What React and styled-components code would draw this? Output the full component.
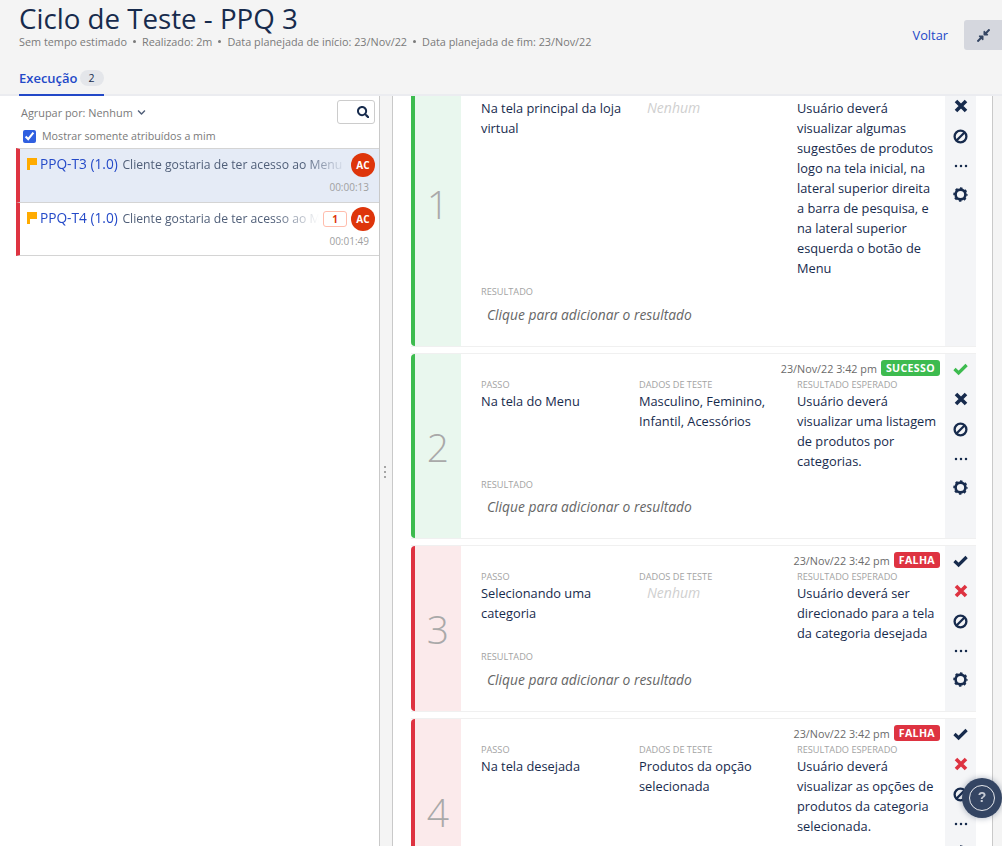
import React from "react";
import styled, { createGlobalStyle } from "styled-components";
import { FaChevronDown, FaCompressAlt, FaSearch } from "react-icons/fa";

const GlobalStyle = createGlobalStyle`
  html, body {
    margin: 0;
    height: 100%;
    overflow: hidden;
    font-family: "Open Sans", "Noto Sans", sans-serif;
    color: #172b4d;
    background: #f4f4f4;
  }
  * { box-sizing: border-box; }
`;

const Page = styled.div`
  height: 846px;
  display: flex;
  flex-direction: column;
  overflow: hidden;
`;

const Header = styled.header`
  height: 96px;
  flex: none;
  display: flex;
  justify-content: space-between;
  background: #f4f4f4;
  border-bottom: 2px solid #ebecf0;
  padding-left: 19px;
`;

const Title = styled.h1`
  margin: 0;
  font-size: 27.7px;
  line-height: 37px;
  font-weight: 400;
  color: #172b4d;
`;

const Meta = styled.div`
  display: flex;
  align-items: center;
  gap: 5px;
  height: 14px;
  margin-top: -3px;
  font-size: 10.85px;
  color: #7a7a7a;
`;

const Dot = styled.span`
  width: 3px;
  height: 3px;
  margin: 0 1px;
  border-radius: 50%;
  background: #7a7a7a;
`;

const Tabs = styled.div`
  display: flex;
  margin-top: 22px;
`;

const Tab = styled.div`
  display: flex;
  align-items: center;
  gap: 2px;
  height: 26px;
  padding-bottom: 9px;
  border-bottom: 2px solid #2349c8;
  font-size: 13px;
  font-weight: 600;
  color: #2349c8;
`;

const TabCount = styled.span`
  width: 24px;
  height: 16px;
  border-radius: 8px;
  background: #e4e6ea;
  color: #172b4d;
  font-size: 10.5px;
  font-weight: 400;
  line-height: 16px;
  text-align: center;
`;

const HeaderActions = styled.div`
  display: flex;
  align-items: center;
  gap: 16px;
  height: 30px;
  margin-top: 20px;
`;

const BackLink = styled.a`
  font-size: 12.8px;
  color: #2349c8;
`;

const CollapseButton = styled.button`
  width: 38px;
  height: 30px;
  display: flex;
  align-items: center;
  justify-content: center;
  padding: 0;
  border: 0;
  border-radius: 3px 0 0 3px;
  background: #d5d7de;
  color: #344563;
  font-size: 15px;
`;

const Main = styled.div`
  flex: 1;
  min-height: 0;
  display: flex;
`;

const Sidebar = styled.aside`
  width: 380px;
  flex: none;
  background: #fff;
  border-right: 1px solid #c9c9c9;
  padding-left: 16px;
`;

const FilterBar = styled.div`
  height: 52px;
  padding: 4px 4px 0 5px;
  display: grid;
  grid-template-columns: 1fr 38px;
  grid-template-rows: 24px 1fr;
  align-items: center;
`;

const GroupBy = styled.div`
  display: flex;
  align-items: center;
  gap: 4px;
  font-size: 10.9px;
  color: #7a7a7a;
  svg { font-size: 9px; color: #505f79; }
`;

const SearchBox = styled.div`
  height: 24px;
  display: flex;
  align-items: center;
  justify-content: flex-end;
  padding-right: 5px;
  border: 1px solid #ccc;
  border-radius: 3px;
  font-size: 12.5px;
  color: #172b4d;
`;

const OnlyMine = styled.label`
  grid-column: 1 / -1;
  display: flex;
  align-items: center;
  gap: 6px;
  padding-left: 2px;
  font-size: 10.7px;
  color: #7a7a7a;
  input {
    width: 13px;
    height: 13px;
    margin: 0;
    accent-color: #2f5fe0;
  }
`;

const TestRow = styled.div`
  height: 54px;
  padding: 4px 4px 0 7px;
  border-left: 4px solid #de3341;
  border-top: 1px solid #d4d4d4;
  border-bottom: ${(p) => (p.$last ? "1px solid #d4d4d4" : "0")};
  background: ${(p) => (p.$active ? "#e5ebf6" : "#fff")};
`;

const RowTop = styled.div`
  display: flex;
  align-items: center;
  gap: 4px;
  height: 24px;
`;

const FlagIcon = styled.svg`
  flex: none;
  width: 10px;
  height: 12px;
  margin-right: -1px;
  margin-top: -2px;
  fill: #ffab00;
`;

const RowTitle = styled.div`
  flex: 1;
  min-width: 0;
  margin-top: -3px;
  white-space: nowrap;
  overflow: hidden;
  font-size: 12.2px;
  color: #505f79;
  -webkit-mask-image: linear-gradient(to right, #000 calc(100% - 44px), transparent);
  mask-image: linear-gradient(to right, #000 calc(100% - 44px), transparent);
  b { margin-right: 1.5px; font-size: 13.7px; font-weight: 400; color: #2349c8; }
`;

const IssueCount = styled.span`
  flex: none;
  width: 24px;
  height: 16px;
  border: 1px solid #ffbdad;
  border-radius: 3px;
  background: #fff;
  color: #de350b;
  font-size: 10px;
  font-weight: 700;
  line-height: 14px;
  text-align: center;
`;

const Avatar = styled.span`
  flex: none;
  width: 24px;
  height: 24px;
  border-radius: 50%;
  background: #de350b;
  color: #fff;
  font-size: 10px;
  font-weight: 700;
  line-height: 24px;
  text-align: center;
`;

const RowTime = styled.div`
  margin-top: 3px;
  padding-right: 6px;
  text-align: right;
  font-size: 10px;
  line-height: 14px;
  color: #a0a0a0;
`;

const Splitter = styled.div`
  width: 13px;
  flex: none;
  display: flex;
  flex-direction: column;
  align-items: center;
  justify-content: center;
  gap: 3px;
  padding: 2px 3px 0 0;
  background: #f4f4f4;
  border-right: 1px solid #c9c9c9;
  i {
    width: 2px;
    height: 2px;
    background: #a5a5a5;
  }
`;

const StepsPane = styled.section`
  width: 600px;
  flex: none;
  overflow: hidden;
  background: #fff;
  border-right: 1px solid #c9c9c9;
  padding-left: 18px;
`;

const StepsList = styled.div`
  width: 565px;
  margin-top: -35px;
  display: flex;
  flex-direction: column;
  gap: 8px;
`;

const StepCard = styled.article`
  display: flex;
  flex: none;
  box-shadow: 0 1px 0 #f0f0f0, 0 -1px 0 #f0f0f0;
`;

const StepNumber = styled.div`
  width: 50px;
  flex: none;
  display: flex;
  align-items: center;
  justify-content: center;
  border-left: 4px solid ${(p) => (p.$fail ? "#de3341" : "#3dbb4f")};
  border-radius: 4px 0 0 4px;
  background: ${(p) => (p.$fail ? "#fbeaeb" : "#e9f7ee")};
  color: #a9a9a9;
  font-size: 39px;
  font-weight: 300;
`;

const StepBody = styled.div`
  flex: 1;
  min-width: 0;
  padding: 6px 5px 21px 20px;
`;

const StatusLine = styled.div`
  height: 16px;
  display: flex;
  align-items: center;
  justify-content: flex-end;
  gap: 4px;
  font-size: 10.8px;
  color: #6b6b6b;
`;

const StatusBadge = styled.span`
  height: 16px;
  padding: 0 5px;
  border-radius: 3px;
  background: ${(p) => (p.$fail ? "#de3341" : "#3dbb4f")};
  color: #fff;
  font-size: 10.6px;
  font-weight: 700;
  line-height: 16px;
  letter-spacing: 0.35px;
`;

const Columns = styled.div`
  display: grid;
  grid-template-columns: 158px 158px 1fr;
  margin-top: 2px;
`;

const FieldLabel = styled.div`
  height: 13px;
  font-size: 9.2px;
  line-height: 13px;
  color: #a3a3a3;
  text-transform: uppercase;
  white-space: nowrap;
`;

const FieldValue = styled.div`
  padding-right: 2px;
  font-size: 12.8px;
  line-height: 20px;
  color: #172b4d;
`;

const EmptyValue = styled.div`
  padding-left: 8px;
  font-size: 14px;
  font-style: italic;
  line-height: 20px;
  color: #cfcfcf;
`;

const ResultBlock = styled.div`
  margin-top: 7px;
`;

const ResultHint = styled.div`
  margin-top: ${(p) => (p.$tight ? 6 : 7)}px;
  padding-left: 6px;
  font-size: 13.8px;
  font-style: italic;
  line-height: 20px;
  color: #666;
`;

const ActionColumn = styled.div`
  width: 31px;
  flex: none;
  display: flex;
  flex-direction: column;
  align-items: center;
  background: #f4f5f7;
`;

const ActionIcon = styled.span`
  height: ${(p) => p.$h || 30}px;
  display: flex;
  flex: none;
  align-items: center;
  justify-content: center;
  color: ${(p) => p.$color || "#172b4d"};
`;

const HelpButton = styled.button`
  position: fixed;
  left: 962px;
  top: 778px;
  width: 40px;
  height: 40px;
  display: flex;
  align-items: center;
  justify-content: center;
  padding: 0;
  border: 0;
  border-radius: 50%;
  background: #344563;
  box-shadow: 0 0 6px rgba(9, 30, 66, 0.35);
`;

const HelpRing = styled.span`
  width: 26px;
  height: 26px;
  border: 1.5px solid #e6e8ec;
  border-radius: 50%;
  color: #c6cbd5;
  font-size: 14px;
  font-weight: 600;
  line-height: 23px;
  text-align: center;
`;

const CheckGlyph = () => (
  <svg width="15" height="14" viewBox="0 0 15 14" fill="none" stroke="currentColor" strokeWidth="3.2">
    <path d="M1.5 7L5.6 11L13.6 3" />
  </svg>
);

const CrossGlyph = () => (
  <svg width="14" height="14" viewBox="0 0 14 14" fill="none" stroke="currentColor" strokeWidth="3.6">
    <path d="M2 2L12 12M12 2L2 12" />
  </svg>
);

const BanGlyph = () => (
  <svg width="15" height="15" viewBox="0 0 15 15" fill="none" stroke="currentColor" strokeWidth="2.3">
    <circle cx="7.5" cy="7.5" r="5.9" />
    <path d="M11.5 3.5L3.5 11.5" />
  </svg>
);

const DotsGlyph = () => (
  <svg width="14" height="6" viewBox="0 0 14 6" fill="currentColor">
    <circle cx="2" cy="3" r="1.25" />
    <circle cx="7" cy="3" r="1.25" />
    <circle cx="12" cy="3" r="1.25" />
  </svg>
);

const GearGlyph = () => (
  <svg width="15" height="15" viewBox="0 0 15 15" fill="none" stroke="currentColor">
    <circle cx="7.5" cy="7.5" r="4.9" strokeWidth="2.6" />
    <circle cx="7.5" cy="7.5" r="6.4" strokeWidth="1.6" strokeDasharray="2.5 2.53" strokeDashoffset="1.25" />
  </svg>
);

const tests = [
  { key: "PPQ-T3 (1.0)", time: "00:00:13", active: true },
  { key: "PPQ-T4 (1.0)", time: "00:01:49", issues: 1 },
];

const steps = [
  {
    n: 1,
    step: "Na tela principal da loja virtual",
    expected:
      "Usuário deverá visualizar algumas sugestões de produtos logo na tela inicial, na lateral superior direita a barra de pesquisa, e na lateral superior esquerda o botão de Menu",
  },
  {
    n: 2,
    tight: true,
    status: "SUCESSO",
    date: "23/Nov/22 3:42 pm",
    step: "Na tela do Menu",
    data: "Masculino, Feminino, Infantil, Acessórios",
    expected: "Usuário deverá visualizar uma listagem de produtos por categorias.",
  },
  {
    n: 3,
    status: "FALHA",
    date: "23/Nov/22 3:42 pm",
    step: "Selecionando uma categoria",
    expected: "Usuário deverá ser direcionado para a tela da categoria desejada",
  },
  {
    n: 4,
    status: "FALHA",
    date: "23/Nov/22 3:42 pm",
    step: "Na tela desejada",
    data: "Produtos da opção selecionada",
    expected: "Usuário deverá visualizar as opções de produtos da categoria selecionada.",
  },
];

function Step({ item }) {
  const fail = item.status === "FALHA";
  const ok = item.status === "SUCESSO";
  return (
    <StepCard>
      <StepNumber $fail={fail}>{item.n}</StepNumber>
      <StepBody>
        <StatusLine>
          {item.date && <span>{item.date}</span>}
          {item.status && <StatusBadge $fail={fail}>{item.status}</StatusBadge>}
        </StatusLine>
        <Columns>
          <div>
            <FieldLabel>Passo</FieldLabel>
            <FieldValue>{item.step}</FieldValue>
          </div>
          <div>
            <FieldLabel>Dados de teste</FieldLabel>
            {item.data ? <FieldValue>{item.data}</FieldValue> : <EmptyValue>Nenhum</EmptyValue>}
          </div>
          <div>
            <FieldLabel>Resultado esperado</FieldLabel>
            <FieldValue>{item.expected}</FieldValue>
          </div>
        </Columns>
        <ResultBlock>
          <FieldLabel>Resultado</FieldLabel>
          <ResultHint $tight={item.tight}>Clique para adicionar o resultado</ResultHint>
        </ResultBlock>
      </StepBody>
      <ActionColumn>
        <ActionIcon $color={ok ? "#3dbb4f" : undefined}><CheckGlyph /></ActionIcon>
        <ActionIcon $color={fail ? "#de3341" : undefined}><CrossGlyph /></ActionIcon>
        <ActionIcon><BanGlyph /></ActionIcon>
        <ActionIcon $h={29}><DotsGlyph /></ActionIcon>
        <ActionIcon $h={29}><GearGlyph /></ActionIcon>
      </ActionColumn>
    </StepCard>
  );
}

export default function App() {
  return (
    <Page>
      <GlobalStyle />
      <Header>
        <div>
          <Title>Ciclo de Teste - PPQ 3</Title>
          <Meta>
            <span>Sem tempo estimado</span>
            <Dot />
            <span>Realizado: 2m</span>
            <Dot />
            <span>Data planejada de início: 23/Nov/22</span>
            <Dot />
            <span>Data planejada de fim: 23/Nov/22</span>
          </Meta>
          <Tabs>
            <Tab>
              Execução <TabCount>2</TabCount>
            </Tab>
          </Tabs>
        </div>
        <HeaderActions>
          <BackLink>Voltar</BackLink>
          <CollapseButton aria-label="Recolher"><FaCompressAlt /></CollapseButton>
        </HeaderActions>
      </Header>
      <Main>
        <Sidebar>
          <FilterBar>
            <GroupBy>
              Agrupar por: Nenhum <FaChevronDown />
            </GroupBy>
            <SearchBox><FaSearch /></SearchBox>
            <OnlyMine>
              <input type="checkbox" defaultChecked />
              Mostrar somente atribuídos a mim
            </OnlyMine>
          </FilterBar>
          {tests.map((t, i) => (
            <TestRow key={t.key} $active={t.active} $last={i === tests.length - 1}>
              <RowTop>
                <FlagIcon viewBox="0 0 10 12">
                  <path d="M0 0H10V7H3V12H0Z" />
                </FlagIcon>
                <RowTitle>
                  <b>{t.key}</b> Cliente gostaria de ter acesso ao Menu
                </RowTitle>
                {t.issues && <IssueCount>{t.issues}</IssueCount>}
                <Avatar>AC</Avatar>
              </RowTop>
              <RowTime>{t.time}</RowTime>
            </TestRow>
          ))}
        </Sidebar>
        <Splitter>
          <i />
          <i />
          <i />
        </Splitter>
        <StepsPane>
          <StepsList>
            {steps.map((s) => (
              <Step key={s.n} item={s} />
            ))}
          </StepsList>
        </StepsPane>
      </Main>
      <HelpButton aria-label="Ajuda"><HelpRing>?</HelpRing></HelpButton>
    </Page>
  );
}
